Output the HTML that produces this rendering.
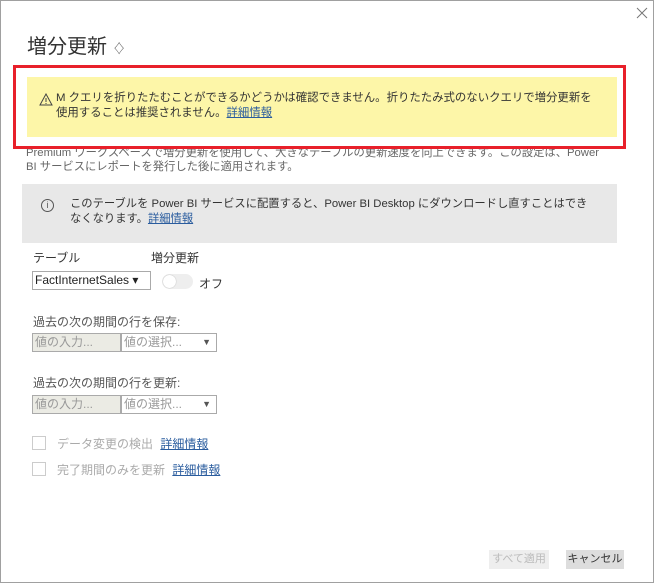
<!DOCTYPE html><html><head><meta charset="utf-8"><style>
body{margin:0;width:654px;height:583px;overflow:hidden;background:#fff;font-family:"Liberation Sans","Noto Sans CJK JP",sans-serif;position:relative}
.a{position:absolute;white-space:nowrap}
.frame{position:absolute;left:0;top:0;width:652px;height:581px;border:1px solid #a0a0a0}
.t{font-size:12px;color:#333}
.lk{color:#2a5c9e;text-decoration:underline}
.in{position:absolute;height:17px;border:1px solid #aaa;font-size:12px;color:#999;line-height:17px;padding-left:2px;box-sizing:content-box}
</style></head><body>
<div class="frame"></div>
<svg class="a" style="left:636px;top:7px" width="12" height="12"><path d="M1 1L11 11M11 1L1 11" stroke="#777" stroke-width="1"/></svg>
<div class="a" style="left:27px;top:30px;font-size:20px;color:#333">増分更新 <span style="font-size:13px;color:#555">♢</span></div>
<div class="a t" style="left:26px;top:146px;line-height:14px;color:#666;font-size:11.3px">Premium ワークスペースで増分更新を使用して、大きなテーブルの更新速度を向上できます。この設定は、Power<br>BI サービスにレポートを発行した後に適用されます。</div>
<div class="a" style="left:13px;top:65px;width:607px;height:78px;border:3px solid #e8202a"></div>
<div class="a" style="left:27px;top:77px;width:590px;height:60px;background:#fdf6a8"></div>
<svg class="a" style="left:39px;top:93px" width="14" height="13"><path d="M7 1L13 12H1Z" fill="none" stroke="#444"/><path d="M7 5V9M7 10V11" stroke="#444"/></svg>
<div class="a t" style="left:56px;top:91px;line-height:15px;font-size:11.4px">M クエリを折りたたむことができるかどうかは確認できません。折りたたみ式のないクエリで増分更新を<br>使用することは推奨されません。<span class="lk">詳細情報</span></div>
<div class="a" style="left:22px;top:184px;width:595px;height:59px;background:#e8e8e8"></div>
<div class="a" style="left:41px;top:199px;width:11px;height:11px;border:1px solid #555;border-radius:50%;font-size:9px;text-align:center;line-height:11px;color:#555">i</div>
<div class="a t" style="left:70px;top:197px;line-height:15px;font-size:11.3px">このテーブルを Power BI サービスに配置すると、Power BI Desktop にダウンロードし直すことはでき<br>なくなります。<span class="lk">詳細情報</span></div>
<div class="a t" style="left:33px;top:249px">テーブル</div>
<div class="a t" style="left:151px;top:249px">増分更新</div>
<div class="in" style="left:32px;top:271px;width:115px;color:#222">FactInternetSales ▾</div>
<div class="a" style="left:162px;top:274px;width:31px;height:15px;border-radius:8px;background:#eee"></div>
<div class="a" style="left:163px;top:275px;width:13px;height:13px;border-radius:50%;background:#fff;box-shadow:0 0 1px #999"></div>
<div class="a t" style="left:199px;top:275px">オフ</div>
<div class="a t" style="left:33px;top:313px;color:#555">過去の次の期間の行を保存:</div>
<div class="in" style="left:32px;top:333px;width:85px;background:#ebebe4">値の入力...</div>
<div class="in" style="left:121px;top:333px;width:92px">値の選択... <span style="float:right;margin-right:5px;font-size:9px;color:#555">▼</span></div>
<div class="a t" style="left:33px;top:374px;color:#555">過去の次の期間の行を更新:</div>
<div class="in" style="left:32px;top:395px;width:85px;background:#ebebe4">値の入力...</div>
<div class="in" style="left:121px;top:395px;width:92px">値の選択... <span style="float:right;margin-right:5px;font-size:9px;color:#555">▼</span></div>
<div class="a" style="left:32px;top:436px;width:12px;height:12px;border:1px solid #ccc"></div>
<div class="a t" style="left:57px;top:435px;color:#aaa">データ変更の検出 <span class="lk" style="margin-left:4px">詳細情報</span></div>
<div class="a" style="left:32px;top:462px;width:12px;height:12px;border:1px solid #ccc"></div>
<div class="a t" style="left:57px;top:461px;color:#aaa">完了期間のみを更新 <span class="lk" style="margin-left:4px">詳細情報</span></div>
<div class="a" style="left:489px;top:550px;width:60px;height:19px;background:#eee;color:#bbb;font-size:11px;text-align:center;line-height:19px">すべて適用</div>
<div class="a" style="left:566px;top:550px;width:58px;height:19px;background:#ddd;color:#333;font-size:11px;text-align:center;line-height:19px">キャンセル</div>
</body></html>
